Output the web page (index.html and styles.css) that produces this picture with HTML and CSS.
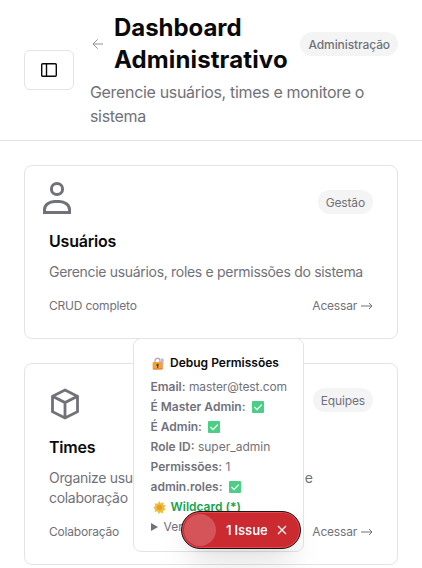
FILE: index.html
```html
<!DOCTYPE html>
<html lang="pt-BR">
<head>
<meta charset="utf-8">
<title>Dashboard Administrativo</title>
<link rel="stylesheet" href="styles.css">
</head>
<body>
<header class="header">
  <button class="toggle" aria-label="Menu"><svg width="18" height="16" viewBox="0 0 18 16" fill="none" stroke="currentColor" stroke-width="1.4"><rect x="1.7" y="1.7" width="14.6" height="12.6" rx="1"/><path d="M6.5 2v12"/></svg></button>
  <div class="intro">
    <div class="title-row">
      <svg class="back" width="16" height="16" viewBox="0 0 16 16" fill="none" stroke="currentColor" stroke-width=".9"><path d="M13 8H3M7.7 3.3 3 8l4.7 4.7"/></svg>
      <h1><span class="t1">Dashboard</span><br><span class="t2">Administrativo</span></h1>
      <span class="badge b-admin"><span>Administração</span></span>
    </div>
    <p class="subtitle"><span>Gerencie usuários, times e monitore o</span><br>sistema</p>
  </div>
</header>
<main class="cards">
  <article class="card">
    <div class="card-top users">
      <svg class="user-icon" width="32" height="34" viewBox="0 0 32 34" fill="none" stroke="currentColor" stroke-width="3"><circle cx="16" cy="8" r="5.6"/><path d="M3.500 31.500v-3c0-4.600 5-8 10-8h5c5 0 10 3.400 10 8v3z"/></svg>
      <span class="badge"><span>Gestão</span></span>
    </div>
    <h2>Usuários</h2>
    <p class="desc">Gerencie usuários, roles e permissões do sistema</p>
    <div class="foot"><span>CRUD completo</span><span class="go">Acessar <svg width="13" height="8" viewBox="0 0 13 8" fill="none" stroke="currentColor" stroke-width="1"><path d="M1 4h11M9 1l3 3-3 3"/></svg></span></div>
  </article>
  <article class="card">
    <div class="card-top">
      <svg width="32" height="32" viewBox="0 0 32 32" fill="none" stroke="currentColor" stroke-width="2.800"><path d="M16 2 28.500 8.300v15.400L16 30 3.500 23.700V8.300zM3.500 8.300 16 14.600l12.500-6.300M16 14.600V30"/></svg>
      <span class="badge"><span>Equipes</span></span>
    </div>
    <h2>Times</h2>
    <p class="desc">Organize usuários em times para <span class="tight">melhor</span> e<br>colaboração</p>
    <div class="foot"><span>Colaboração</span><span class="go">Acessar <svg width="13" height="8" viewBox="0 0 13 8" fill="none" stroke="currentColor" stroke-width="1"><path d="M1 4h11M9 1l3 3-3 3"/></svg></span></div>
  </article>
</main>
<aside class="debug">
  <h3><svg width="13" height="13" viewBox="0 0 13 13"><path d="M9 1.500a2 2 0 0 1 2.500 3L11 12H9z" fill="#c9b8cb"/><path d="M3 6V3.700a2.500 2.500 0 0 1 5 0V6" fill="none" stroke="#b9abb8" stroke-width="1.400"/><rect x=".6" y="5" width="10" height="7.500" rx="1" fill="#f2a13b"/><path d="M1 11h9.300v1.500H1z" fill="#e8863b"/><circle cx="5.600" cy="8" r="1.200" fill="#59453b"/><path d="M5 8h1.200v3H5z" fill="#59453b"/></svg><span>Debug Permissões</span></h3>
  <ul>
    <li><b>Email:</b> <span class="mail">master@test.com</span></li>
    <li><b>É Master Admin:</b> <svg class="check" width="12" height="12" viewBox="0 0 12 12"><rect width="12" height="12" rx="1" fill="#4bcf87"/><path d="m2.500 6 2.500 2.600 4.700-5" fill="none" stroke="#fff" stroke-width="1.300"/></svg></li>
    <li><b>É Admin:</b> <svg class="check" width="12" height="12" viewBox="0 0 12 12"><rect width="12" height="12" rx="1" fill="#4bcf87"/><path d="m2.500 6 2.500 2.600 4.700-5" fill="none" stroke="#fff" stroke-width="1.300"/></svg></li>
    <li><b>Role ID:</b> super_admin</li>
    <li><b>Permissões:</b> 1</li>
    <li><b>admin.roles:</b> <svg class="check" width="12" height="12" viewBox="0 0 12 12"><rect width="12" height="12" rx="1" fill="#4bcf87"/><path d="m2.500 6 2.500 2.600 4.700-5" fill="none" stroke="#fff" stroke-width="1.300"/></svg></li>
    <li class="wild"><svg width="13" height="13" viewBox="0 0 13 13"><path d="m6.500 0 1.200 2.500L10.600 1l-.2 3 2.600.5-1.800 2.200 1.600 2.500-2.800.3-.2 2.900-2.500-1.200L5.500 13l-1-2.700-3 .7.600-2.800L0 6.500l2.500-1.300L1.600 2.300l3 .5z" fill="#f0bd3e"/><circle cx="6.500" cy="6.500" r="2.800" fill="#dfa426"/></svg><b>Wildcard (*)</b></li>
    <li class="details"><i></i>Ver permissões</li>
  </ul>
</aside>
<div class="toast"><span class="dot"></span><span class="issue">1 Issue</span><svg width="10" height="10" viewBox="0 0 10 10" fill="none" stroke="#fff" stroke-width="1.200"><path d="m1 1 8 8M9 1 1 9"/></svg></div>
</body>
</html>
```
FILE: styles.css
```css
* { box-sizing: border-box; margin: 0; padding: 0; }
body { width: 422px; height: 568px; overflow: hidden; background: #fff; color: #09090b; font-family: Inter, "Liberation Sans", sans-serif; }
svg { flex: none; }
.header { height: 141px; display: flex; align-items: center; gap: 16px; padding: 0 24px; border-bottom: 1px solid #e4e4e7; }
.toggle { flex: none; width: 50px; height: 40px; display: flex; align-items: center; justify-content: center; background: #fff; border: 1px solid #e4e4e7; border-radius: 6px; color: #09090b; }
.intro { flex: 1; }
.title-row { display: flex; align-items: center; justify-content: space-between; margin-bottom: 4px; }
.back { color: #85858c; margin-right: 8px; }
h1 { flex: 1; font-size: 24px; line-height: 32px; font-weight: 700; white-space: nowrap; }
.t1 { letter-spacing: -.05px; }
.t2 { letter-spacing: .13px; }
.subtitle { font-size: 16px; line-height: 24px; color: #71717a; white-space: nowrap; letter-spacing: -.33px; }
.badge { height: 24px; padding: 0 8px; display: flex; align-items: center; border-radius: 12px; background: #f4f4f5; color: #71717a; font-size: 12px; font-weight: 500; white-space: nowrap; letter-spacing: -.1px; }
.cards { padding: 24px; display: grid; gap: 24px; }
.card { border: 1px solid #e4e4e7; border-radius: 8px; padding: 24px; background: #fff; color: #71717a; }
.card-top { display: flex; align-items: flex-start; justify-content: space-between; height: 32px; margin-bottom: 15px; }
.card-top.users { height: 24px; }
.user-icon { margin: -9px 0 0 -8px; }
.card-top .badge { font-weight: 400; letter-spacing: -.15px; }
h2 { font-size: 16px; line-height: 24px; font-weight: 600; color: #09090b; letter-spacing: -.2px; }
.desc { margin: 9px 0 16px; font-size: 14px; line-height: 20px; white-space: nowrap; letter-spacing: -.31px; }
.tight { letter-spacing: -.9px; }
.foot { display: flex; justify-content: space-between; font-size: 12px; line-height: 16px; letter-spacing: -.2px; }
.go { display: flex; align-items: center; gap: 3px; }
.debug { position: fixed; left: 133px; top: 338px; width: 171px; height: 214px; padding: 14px 16px 16px 16.500px; background: #fff; border: 1px solid #e4e4e7; border-radius: 8px; font-size: 12px; color: #71717a; white-space: nowrap; }
h3 { display: flex; align-items: center; gap: 5px; padding-left: 1.500px; font-size: 12px; line-height: 20px; font-weight: 600; color: #09090b; margin-bottom: 4px; }
ul { list-style: none; }
li { height: 20px; line-height: 20px; }
li b { font-weight: 600; }
.mail { letter-spacing: -.1px; }
.check { margin-left: 3px; vertical-align: -2px; }
.wild { display: flex; align-items: center; gap: 5px; padding-left: 2px; color: #16a34a; }
.details { display: flex; align-items: center; gap: 6px; }
.details i { border-left: 7px solid #71717a; border-top: 4px solid transparent; border-bottom: 4px solid transparent; }
.toast { position: fixed; left: 181px; top: 511px; width: 120px; height: 38px; border-radius: 19px; display: flex; align-items: center; padding-left: 2px; background: #ca2a30; border: 1px solid #171717; box-shadow: inset 0 0 0 1px #e5484d, 0 16px 32px -8px rgba(0,0,0,.18), 0 4px 8px rgba(0,0,0,.03); color: #fff; }
.dot { width: 32px; height: 32px; border-radius: 50%; background: #d55459; }
.issue { width: 42px; margin: 0 9px 0 10px; font-size: 13px; font-weight: 600; letter-spacing: -.1px; white-space: nowrap; }
```
